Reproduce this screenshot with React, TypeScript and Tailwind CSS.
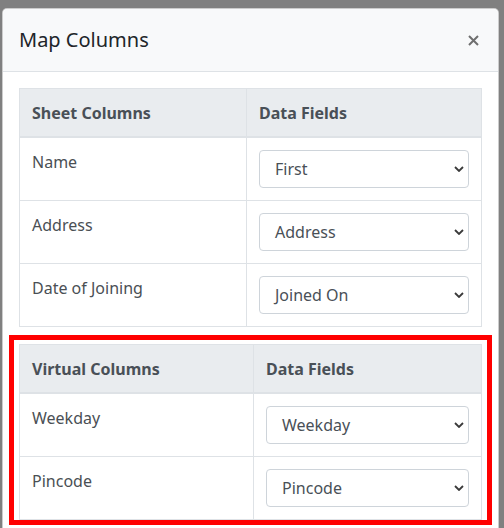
import React from "react";

const font = { fontFamily: '"Noto Sans", "Open Sans", sans-serif' };

function Chevron() {
  return (
    <svg
      width="10"
      height="6"
      viewBox="0 0 10 6"
      className="absolute right-[4px] top-1/2 -translate-y-1/2"
    >
      <path d="M1 1l4 4 4-4" fill="none" stroke="#3a3a3a" strokeWidth="1.8" />
    </svg>
  );
}

function Select({ value }: { value: string }) {
  return (
    <div className="relative flex h-[38px] items-center rounded-[4px] border border-[#ced4da] bg-white pl-[15px] text-[16px] text-[#495057]">
      {value}
      <Chevron />
    </div>
  );
}

function MapTable({
  title,
  firstCol,
  rows,
}: {
  title: string;
  firstCol: string;
  rows: [string, string][];
}) {
  return (
    <table className="w-full table-fixed border-collapse border border-[#dee2e6]">
      <colgroup>
        <col style={{ width: firstCol }} />
        <col />
      </colgroup>
      <thead>
        <tr className="bg-[#e9ecef]">
          <th className="border border-b-2 border-[#dee2e6] px-3 pt-[12px] pb-[11px] text-left text-[16px] font-bold leading-6 text-[#495057]">
            {title}
          </th>
          <th className="border border-b-2 border-[#dee2e6] px-3 pt-[12px] pb-[11px] text-left text-[16px] font-bold leading-6 text-[#495057]">
            Data Fields
          </th>
        </tr>
      </thead>
      <tbody>
        {rows.map(([label, value]) => (
          <tr key={label}>
            <td className="border border-[#dee2e6] px-3 py-3 align-top text-[16px] leading-6 text-[#4a4f54]">
              {label}
            </td>
            <td className="border border-[#dee2e6] px-3 py-3 align-top">
              <Select value={value} />
            </td>
          </tr>
        ))}
      </tbody>
    </table>
  );
}

export default function App() {
  return (
    <div className="h-[528px] w-[504px] overflow-hidden bg-[#808080] pt-[8px] pl-[2px]" style={font}>
      <div className="w-[497px] rounded-t-[5px] border border-black/20 bg-white">
        <div className="flex items-center justify-between rounded-t-[5px] border-b border-[#dee2e6] bg-[#f8f9fa] px-4 py-4">
          <h5 className="text-[20px] leading-[30px] text-[#212529]">Map Columns</h5>
          <svg width="11" height="11" viewBox="0 0 11 11" className="mr-[3px]">
            <path d="M1 1L10 10M10 1L1 10" stroke="#6f6f6f" strokeWidth="2" />
          </svg>
        </div>
        <div className="p-4">
          <MapTable
            title="Sheet Columns"
            firstCol="227px"
            rows={[
              ["Name", "First"],
              ["Address", "Address"],
              ["Date of Joining", "Joined On"],
            ]}
          />
          <div className="-mx-[10px] mt-[8px] border-[5px] border-[#ff0000] px-[5px] pt-[4px]">
            <MapTable
              title="Virtual Columns"
              firstCol="234px"
              rows={[
                ["Weekday", "Weekday"],
                ["Pincode", "Pincode"],
              ]}
            />
          </div>
        </div>
      </div>
    </div>
  );
}
